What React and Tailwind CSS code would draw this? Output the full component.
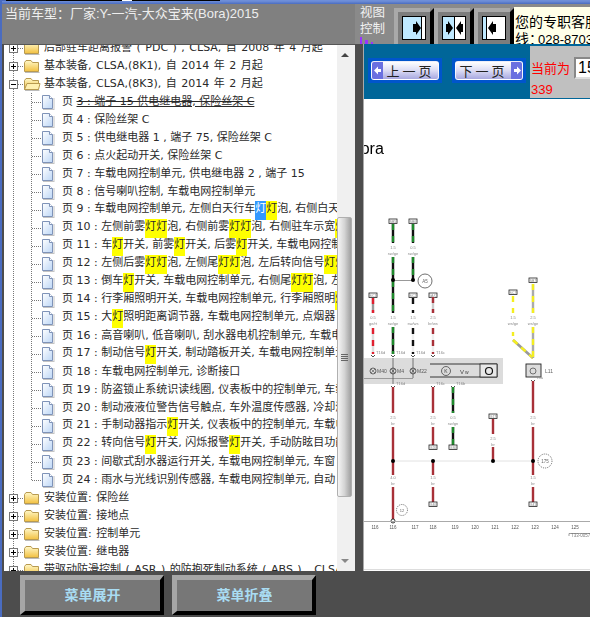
import React from 'react';

const treeFont = { fontFamily: '"DejaVu Sans", "Noto Sans CJK SC", sans-serif' };

const pages = [
  '页 4 : 保险丝架 C',
  '页 5 : 供电继电器 1 , 端子 75, 保险丝架 C',
  '页 6 : 点火起动开关, 保险丝架 C',
  '页 7 : 车载电网控制单元, 供电继电器 2 , 端子 15',
  '页 8 : 信号喇叭控制, 车载电网控制单元',
  '页 9 : 车载电网控制单元, 左侧白天行车灯灯泡, 右侧白天行车灯灯泡',
  '页 10 : 左侧前雾灯灯泡, 右侧前雾灯灯泡, 右侧驻车示宽灯灯泡',
  '页 11 : 车灯开关, 前雾灯开关, 后雾灯开关, 车载电网控制单元',
  '页 12 : 左侧后雾灯灯泡, 左侧尾灯灯泡, 左后转向信号灯灯泡',
  '页 13 : 倒车灯开关, 车载电网控制单元, 右侧尾灯灯泡, 左侧尾灯灯泡',
  '页 14 : 行李厢照明开关, 车载电网控制单元, 行李厢照明灯',
  '页 15 : 大灯照明距离调节器, 车载电网控制单元, 点烟器',
  '页 16 : 高音喇叭, 低音喇叭, 刮水器电机控制单元, 车载电网控制单元',
  '页 17 : 制动信号灯开关, 制动踏板开关, 车载电网控制单元',
  '页 18 : 车载电网控制单元, 诊断接口',
  '页 19 : 防盗锁止系统识读线圈, 仪表板中的控制单元, 车载电网',
  '页 20 : 制动液液位警告信号触点, 车外温度传感器, 冷却液',
  '页 21 : 手制动器指示灯开关, 仪表板中的控制单元, 车载电网',
  '页 22 : 转向信号灯开关, 闪烁报警灯开关, 手动防眩目功能',
  '页 23 : 间歇式刮水器运行开关, 车载电网控制单元, 车窗',
  '页 24 : 雨水与光线识别传感器, 车载电网控制单元, 自动',
];

// 灯 is the search hit, page 9's first one is the active match
const Marked = ({ text }) => {
  let seen = 0;
  return text.split('').map((ch, i) => {
    if (ch !== '灯') return ch;
    seen += 1;
    const active = text.startsWith('页 9 ') && seen === 1;
    return (
      <span key={i} className={active ? 'inline-block h-[19px] bg-[#3399ff] text-white' : 'inline-block h-[19px] bg-[#ffff00]'}>
        灯
      </span>
    );
  });
};

const FolderRow = ({ text, open }) => (
  <div className="flex h-[18px] items-center">
    <svg width="40" height="18" className="shrink-0">
      <defs>
        <linearGradient id="fold" x1="0" y1="0" x2="0" y2="1">
          <stop offset="0" stopColor="#fff8c8" />
          <stop offset="1" stopColor="#f2c040" />
        </linearGradient>
      </defs>
      <line x1="9.5" y1="0" x2="9.5" y2="18" stroke="#777" strokeDasharray="1 1" />
      <line x1="14" y1="9.5" x2="20" y2="9.5" stroke="#777" strokeDasharray="1 1" />
      <rect x="5.5" y="5.5" width="8" height="8" fill="#fff" stroke="#777" />
      <line x1="7" y1="9.5" x2="12" y2="9.5" stroke="#000" />
      {!open && <line x1="9.5" y1="7" x2="9.5" y2="12" stroke="#000" />}
      <path d="M20.5 5.5 L22 3.5 H27 L28.5 5.5 H34.5 V14.5 H20.5 Z" fill="url(#fold)" stroke="#b89a50" />
      {open && <path d="M20.5 14.5 L23 8.5 H36 L34.5 14.5 Z" fill="#fff0b0" stroke="#b89a50" />}
      <line x1="21" y1="15.5" x2="35.5" y2="15.5" stroke="#bbb" />
    </svg>
    <span className="whitespace-nowrap [word-spacing:1px]">{text}</span>
  </div>
);

const PageRow = ({ children, last }) => (
  <div className="flex h-[18px] items-center">
    <svg width="58" height="18" className="shrink-0">
      <defs>
        <linearGradient id="doc" x1="0" y1="0" x2="1" y2="1">
          <stop offset="0" stopColor="#ffffff" />
          <stop offset="1" stopColor="#bcd6f6" />
        </linearGradient>
      </defs>
      <line x1="9.5" y1="0" x2="9.5" y2="18" stroke="#777" strokeDasharray="1 1" />
      <line x1="27.5" y1="0" x2="27.5" y2={last ? 9 : 18} stroke="#777" strokeDasharray="1 1" />
      <line x1="28" y1="9.5" x2="38" y2="9.5" stroke="#777" strokeDasharray="1 1" />
      <path d="M38.5 2.5 H45.5 L48.5 5.5 V15.5 H38.5 Z" fill="url(#doc)" stroke="#7f93b8" />
      <path d="M45.5 2.5 V5.5 H48.5" fill="#fff" stroke="#7f93b8" />
      <line x1="50" y1="5" x2="50" y2="17" stroke="#c4c4c4" />
      <line x1="39" y1="16.5" x2="50" y2="16.5" stroke="#c4c4c4" />
    </svg>
    <span className="whitespace-nowrap">{children}</span>
  </div>
);

const ViewButton = ({ children }) => (
  <div className="flex h-[36px] w-[40px] shrink-0 self-end">
    <div className="w-[36px] bg-[#a9a9a9] pl-[4px] pt-[4px]">
      <div className="h-[32px] bg-[#7d7d7d] pl-[4px] pt-[4px]">
        <svg width="24" height="24" className="block">
          {children}
        </svg>
      </div>
    </div>
    <div className="w-[4px] bg-black [clip-path:polygon(0_4px,100%_0,100%_100%,0_100%)]" />
  </div>
);

const PagerButton = ({ label, dir }) => (
  <div className="flex h-[25px] w-[74px] shrink-0 items-stretch border-[3px] border-[#0055cc] bg-[#0055cc]">
    <div className={`flex flex-1 items-stretch overflow-hidden rounded-[3px] border border-white/80 bg-gradient-to-b from-[#ffffff] via-[#dcdcf4] to-[#a8a8e0] ${dir === 'next' ? 'flex-row-reverse' : ''}`}>
      <div className="flex w-[11px] items-center justify-center bg-[#6a70e0] text-[9px] leading-none text-white">
        <svg width="8" height="9">
          {dir === 'next' ? <path d="M1 3 H4 V0.5 L8 4.5 L4 8.5 V6 H1 Z" fill="#fff" /> : <path d="M7 3 H4 V0.5 L0 4.5 L4 8.5 V6 H7 Z" fill="#fff" />}
        </svg>
      </div>
      <span className="flex-1 text-center text-[13px] leading-[19px] tracking-[3px] text-[#222]">{label}</span>
    </div>
  </div>
);

const BevelButton = ({ label }) => (
  <div className="flex h-[40px] w-[144px] items-center justify-center border-t-[5px] border-r-[4px] border-b-[4px] border-l-[5px] border-t-[#a6a6a6] border-r-black border-b-black border-l-[#a6a6a6] bg-[#777777] text-[14px] font-bold text-[#a9dcf2]">
    {label}
  </div>
);

const Wire = ({ x, y1, y2, a, b, dash = 6 }) => (
  <g strokeWidth="2.4">
    <line x1={x} y1={y1} x2={x} y2={y2} stroke={a} />
    {b && <line x1={x} y1={y1} x2={x} y2={y2} stroke={b} strokeDasharray={`${dash} ${dash}`} />}
  </g>
);

const Tag = ({ x, y, w = 8, t }) => (
  <g>
    <rect x={x - w / 2} y={y} width={w} height="4.5" fill="#fff" stroke="#222" strokeWidth="0.8" />
    <text x={x} y={y + 3.8} fontSize="3.5" textAnchor="middle" fill="#888">{t}</text>
  </g>
);

const Note = ({ x, y, a, b }) => (
  <g fontSize="4" textAnchor="middle" fill="#888">
    <text x={x} y={y}>{a}</text>
    <text x={x} y={y + 6}>{b}</text>
  </g>
);

const Node = ({ x, y }) => <circle cx={x} cy={y} r="2" fill="#000" />;

const Pin = ({ x, y, a }) => (
  <g>
    <path d={`M${x - 2} ${y - 2} L${x} ${y} L${x + 2} ${y - 2}`} fill="none" stroke="#222" strokeWidth="0.8" />
    <text x={x + 3} y={y - 3} fontSize="4" fill="#888">{a}</text>
  </g>
);

const Diagram = () => (
  <svg width="226" height="471" className="block blur-[0.4px]" style={{ fontFamily: '"Liberation Sans", sans-serif' }}>
    <g transform="translate(-364 -99)">
      <text x="350" y="154" fontSize="16" fill="#000">Bora</text>

      <Tag x={393} y={219} t="SB5" />
      <Tag x={413} y={219} t="SB6" />
      <Wire x={393} y1={224} y2={243} a="#111" b="#1f8a2c" />
      <Wire x={413} y1={224} y2={243} a="#111" b="#1f8a2c" />
      <Note x={393} y={249} a="1.5" b="sw/ge" />
      <Note x={413} y={249} a="0.5" b="sw/ge" />
      <Wire x={393} y1={257} y2={313} a="#111" b="#1f8a2c" />
      <Wire x={413} y1={257} y2={280} a="#111" b="#1f8a2c" />
      <line x1="393" y1="280.5" x2="413" y2="280.5" stroke="#999" />
      <Node x={393} y={280} />
      <Node x={413} y={280} />
      <circle cx="425" cy="281" r="7" fill="#fff" stroke="#333" strokeWidth="0.7" />
      <text x="425" y="283" fontSize="4.5" textAnchor="middle" fill="#666">A5</text>

      <Tag x={373} y={293} t="SC1" />
      <Tag x={413} y={293} t="SC2" />
      <Tag x={433} y={293} t="5A/C" />
      <Wire x={373} y1={298} y2={313} a="#999" b="#e02030" />
      <Wire x={413} y1={298} y2={313} a="#fff" b="#111" />
      <Wire x={433} y1={297} y2={313} a="#ccc" b="#a83038" />
      <Note x={373} y={319} a="0.5" b="ge/rt" />
      <Note x={393} y={319} a="1.5" b="sw/ge" />
      <Note x={413} y={319} a="1.5" b="sw/ws" />
      <Note x={433} y={319} a="2.5" b="br/ws" />
      <Wire x={373} y1={328} y2={354} a="#ddd" b="#e02030" />
      <Wire x={393} y1={327} y2={354} a="#111" b="#1f8a2c" />
      <Wire x={413} y1={328} y2={354} a="#eee" b="#111" />
      <Wire x={433} y1={328} y2={354} a="#eee" b="#a83038" />
      <Pin x={373} y={357} a="T16d" />
      <Pin x={393} y={357} a="T16d" />
      <Pin x={413} y={357} a="T16d" />
      <Pin x={433} y={357} a="T16c" />

      <Tag x={533} y={278} t="SB7" />
      <Tag x={513} y={290} t="SC7" />
      <Wire x={533} y1={284} y2={313} a="#aaa" b="#f4ee20" />
      <Wire x={513} y1={296} y2={313} a="#fff" b="#f4ee20" />
      <Note x={513} y={319} a="1.5" b="ws/ge" />
      <Note x={533} y={319} a="2.5" b="ws/ge" />
      <Wire x={513} y1={332} y2={340} a="#fff" b="#f4ee20" dash={4} />
      <path d="M513 340 L533 358" stroke="#999" strokeWidth="2.6" fill="none" />
      <path d="M513 340 L533 358" stroke="#f4ee20" strokeWidth="2.4" strokeDasharray="6 5" fill="none" />
      <Wire x={533} y1={327} y2={358} a="#aaa" b="#f4ee20" />

      <rect x="364" y="358" width="139" height="26" fill="#dcdcdc" />
      <line x1="364" y1="378.5" x2="413" y2="378.5" stroke="#999" />
      <line x1="393" y1="358" x2="393" y2="384" stroke="#555" strokeWidth="0.8" />
      <line x1="413" y1="358" x2="413" y2="378" stroke="#555" strokeWidth="0.8" />
      {[[373, 'M40'], [393, 'M4'], [413, 'M22']].map(([x, t]) => (
        <g key={x}>
          <circle cx={x} cy="371" r="3" fill="none" stroke="#333" strokeWidth="0.7" />
          <path d={`M${x - 2} ${369} L${x + 2} ${373} M${x + 2} ${369} L${x - 2} ${373}`} stroke="#333" strokeWidth="0.5" />
          <text x={x + 4} y="373" fontSize="5" fill="#555">{t}</text>
        </g>
      ))}
      <path d="M430 364 H497 V377 H430" fill="none" stroke="#222" strokeWidth="0.9" />
      <circle cx="446" cy="371" r="4.5" fill="none" stroke="#333" strokeWidth="0.7" />
      <text x="446" y="373" fontSize="5" textAnchor="middle" fill="#444">K</text>
      <text x="460" y="374" fontSize="6" fill="#444">V</text>
      <text x="465" y="374" fontSize="5" fill="#444">w</text>
      <rect x="480" y="364" width="17" height="13" fill="#e8e8e8" stroke="#222" strokeWidth="0.8" />
      <circle cx="489" cy="371" r="3.5" fill="none" stroke="#111" strokeWidth="1.2" />

      <rect x="526" y="364" width="15" height="13" fill="#dcdcdc" stroke="#222" strokeWidth="0.9" />
      <circle cx="533" cy="371" r="3" fill="none" stroke="#444" strokeWidth="0.7" />
      <text x="545" y="373" fontSize="5" fill="#666">L11</text>

      <Pin x={393} y={388} a="T16d" />
      <Pin x={433} y={388} a="T16c" />
      <Pin x={453} y={388} a="T16b" />
      <Pin x={533} y={382} a="T3a" />
      <Wire x={393} y1={387} y2={413} a="#a83038" />
      <Wire x={433} y1={387} y2={413} a="#a83038" />
      <Wire x={453} y1={387} y2={413} a="#111" b="#1f8a2c" />
      <Wire x={533} y1={381} y2={413} a="#a83038" />
      <Note x={393} y={419} a="2.5" b="br" />
      <Note x={433} y={419} a="2.5" b="br" />
      <Note x={453} y={419} a="0.5" b="sw/gn" />
      <Note x={533} y={419} a="2.5" b="br" />
      <Wire x={393} y1={427} y2={475} a="#a83038" />
      <Wire x={433} y1={427} y2={445} a="#a83038" />
      <Wire x={453} y1={427} y2={445} a="#111" b="#1f8a2c" />
      <Wire x={533} y1={427} y2={475} a="#a83038" />
      <Tag x={433} y={445} t="G20" />
      <Tag x={453} y={445} t="G30" />

      <Tag x={493} y={414} t="G17" />
      <Wire x={493} y1={419} y2={434} a="#a83038" />
      <Note x={493} y={440} a="2.5" b="br" />
      <Wire x={493} y1={447} y2={461} a="#a83038" />

      <line x1="393" y1="461" x2="533" y2="461" stroke="#e2e2e2" />
      <Wire x={433} y1={461} y2={475} a="#a83038" />
      <Node x={393} y={461} />
      <Node x={433} y={461} />
      <Node x={493} y={461} />
      <Node x={533} y={461} />
      <circle cx="545" cy="461" r="7" fill="#fff" stroke="#333" strokeWidth="0.7" strokeDasharray="1 1" />
      <text x="545" y="463" fontSize="4.5" textAnchor="middle" fill="#666">175</text>

      <Note x={393} y={479} a="4.0" b="br" />
      <Note x={433} y={479} a="1.5" b="br" />
      <Note x={533} y={479} a="1.5" b="br" />
      <Wire x={393} y1={487} y2={519} a="#a83038" />
      <Wire x={433} y1={487} y2={502} a="#a83038" />
      <Wire x={533} y1={487} y2={502} a="#a83038" />
      <Tag x={433} y={502} t="G40" />
      <Tag x={533} y={502} t="G41" />
      <circle cx="402" cy="510" r="5.5" fill="#fff" stroke="#333" strokeWidth="0.7" strokeDasharray="1 1" />
      <text x="402" y="512" fontSize="4" textAnchor="middle" fill="#666">12</text>
      <circle cx="393" cy="521" r="2" fill="#fff" stroke="#000" strokeWidth="0.8" />

      <line x1="364" y1="521.5" x2="590" y2="521.5" stroke="#aaa" />
      {[[375, 116], [393, 116], [415, 117], [433, 118], [455, 119], [475, 120], [495, 121], [515, 122], [535, 123], [555, 124], [575, 125]].map(([x, t]) => (
        <text key={x} x={x} y="529" fontSize="4.5" textAnchor="middle" fill="#555">{t}</text>
      ))}
      <path d="M569 536 V533.5 H590" fill="none" stroke="#777" strokeWidth="0.7" />
      <text x="571" y="537" fontSize="4.5" fill="#777">T33-0057</text>
      <line x1="364" y1="569.5" x2="590" y2="569.5" stroke="#ddd" />
    </g>
  </svg>
);

export default function App() {
  return (
    <div
      className="relative flex h-[617px] w-[590px] overflow-hidden bg-[#4d4d4d]"
      style={{ fontFamily: '"Liberation Sans", "Noto Sans CJK SC", sans-serif' }}
    >
      <div className="w-[2px] shrink-0 bg-[#4a6cc0]" />
      <div className="flex w-[588px] flex-col">
        {/* window chrome */}
        <div className="flex h-[1px] shrink-0">
          <div className="w-[4px] bg-[#4a6cc0]" />
          <div className="w-[116px] bg-black" />
          <div className="w-[10px] bg-white" />
          <div className="w-[88px] bg-black" />
          <div className="flex-1 bg-[#6f8fd8]" />
        </div>
        <div className="h-[3px] shrink-0 bg-gradient-to-b from-[#6f8fd8] to-[#4a6cc0]" />

        {/* header */}
        <div className="flex h-[40px] shrink-0 overflow-hidden bg-[#808080]">
          <div className="w-[353px] shrink-0 pl-[3px] pt-[1px] text-[13px] leading-[18px] whitespace-nowrap text-[#eeeeee]">
            当前车型：厂家:Y-一汽-大众宝来(Bora)2015
          </div>
          <div className="flex w-[235px] bg-[#8a8a8a]">
            <div className="w-[39px] shrink-0 pl-[5px] pt-px">
              <div className="w-[26px] text-[12.5px] leading-[16px] text-[#f2f2f2]">视图控制</div>
              <div className="flex h-[7px] items-end gap-[3px]">
                <div className="h-[7px] w-[2px] bg-[#9933ff]" />
                <div className="h-[4px] w-[3px] bg-[#9933ff]" />
                <div className="h-[2px] w-[2px] bg-[#9933ff]" />
              </div>
            </div>
            <ViewButton>
              <rect x="0.5" y="0.5" width="23" height="23" fill="#bfe9ff" stroke="#000" />
              <rect x="20" y="1" width="3" height="22" fill="#fff" />
              <line x1="19.5" y1="1" x2="19.5" y2="23" stroke="#000" />
              <path d="M11 8 H14 V5 L19 12 L14 19 V16 H11 Z" fill="#000" />
            </ViewButton>
            <ViewButton>
              <rect x="0.5" y="0.5" width="23" height="23" fill="#fff" stroke="#000" />
              <rect x="1" y="1" width="11" height="22" fill="#bfe9ff" />
              <line x1="12.5" y1="1" x2="12.5" y2="23" stroke="#000" />
              <path d="M4 8 H6 V5 L11 12 L6 19 V16 H4 Z" fill="#000" />
              <path d="M21 8 H19 V5 L14 12 L19 19 V16 H21 Z" fill="#000" />
            </ViewButton>
            <ViewButton>
              <rect x="0.5" y="0.5" width="23" height="23" fill="#fff" stroke="#000" />
              <rect x="1" y="1" width="3" height="22" fill="#bfe9ff" />
              <line x1="4.5" y1="1" x2="4.5" y2="23" stroke="#000" />
              <path d="M14 8 H11 V5 L6 12 L11 19 V16 H14 Z" fill="#000" />
            </ViewButton>
            <div className="mt-[3px] flex-1 overflow-hidden bg-[#ffffe8] pl-px pt-[7px] text-[14px] leading-[17px] whitespace-nowrap text-black">
              <div>您的专职客服</div>
              <div>
                线：<span className="ml-[-5px] text-[13px]">028-8703</span>
              </div>
            </div>
          </div>
        </div>

        <div className="flex h-[527px] shrink-0">
          {/* page tree */}
          <div className="flex w-[353px] shrink-0 pl-[2px]">
            <div className="w-[333px] shrink-0 overflow-hidden border-t border-[#555] bg-white text-[11px] text-[#2a2a2a]" style={treeFont}>
              <div className="mt-[-6px]">
                <FolderRow text="后部驻车距离报警 ( PDC ) , CLSA, 自 2008 年 4 月起" />
                <FolderRow text="基本装备, CLSA,(8K1), 自 2014 年 2 月起" />
                <FolderRow text="基本装备, CLSA,(8K3), 自 2014 年 2 月起" open />
                <PageRow>
                  页 <span className="[text-decoration-line:underline_line-through]">3 : 端子 15 供电继电器, 保险丝架 C</span>
                </PageRow>
                {pages.map((p, i) => (
                  <PageRow key={p} last={i === pages.length - 1}>
                    <Marked text={p} />
                  </PageRow>
                ))}
                <FolderRow text="安装位置: 保险丝" />
                <FolderRow text="安装位置: 接地点" />
                <FolderRow text="安装位置: 控制单元" />
                <FolderRow text="安装位置: 继电器" />
                <FolderRow text="带驱动防滑控制 ( ASR ) 的防抱死制动系统 ( ABS ) , CLSA" />
              </div>
            </div>
            <div className="flex w-[18px] shrink-0 flex-col border-t border-[#555] bg-[#f0f0f0]">
              <div className="flex h-[20px] shrink-0 items-center justify-center pr-[3px]">
                <div className="h-0 w-0 border-x-[4px] border-b-[4px] border-x-transparent border-b-[#444]" />
              </div>
              <div className="h-[152px] shrink-0" />
              <div className="flex h-[280px] w-[15px] shrink-0 flex-col items-center justify-center gap-[1px] rounded-[2px] border border-[#b0b0b0] bg-gradient-to-r from-[#f6f6f6] via-[#d4d4d4] to-[#a0a0a0]">
                <div className="h-px w-[7px] bg-[#666]" />
                <div className="h-px w-[7px] bg-[#666]" />
                <div className="h-px w-[7px] bg-[#666]" />
                <div className="h-px w-[7px] bg-[#666]" />
              </div>
              <div className="flex-1" />
              <div className="flex h-[20px] shrink-0 items-center justify-center pr-[3px]">
                <div className="h-0 w-0 border-x-[4px] border-t-[4px] border-x-transparent border-t-[#888]" />
              </div>
            </div>
          </div>

          <div className="w-[9px] shrink-0 border-r border-[#aaaaaa] bg-[#4d4d4d]" />

          {/* drawing pane */}
          <div className="flex w-[226px] shrink-0 flex-col overflow-hidden">
            <div className="flex h-[55px] shrink-0 items-center bg-[#006699]">
              <div className="mb-[3px] flex w-[166px] shrink-0 gap-[10px] pl-[4px]">
                <PagerButton label="上一页" dir="prev" />
                <PagerButton label="下一页" dir="next" />
              </div>
              <div className="h-[52px] w-[60px] shrink-0 overflow-hidden bg-[#c0c0c0] pt-[11px] text-[13px] leading-[18px] text-[#ff0000]">
                <div className="flex h-[22px] items-center">
                  <span className="shrink-0 whitespace-nowrap pl-px pt-[3px]">当前为</span>
                  <div className="ml-[4px] h-[22px] w-[40px] shrink-0 border-2 border-t-[#888] border-r-[#ddd] border-b-[#ddd] border-l-[#888] bg-white pl-[2px] text-[16px] leading-[18px] text-black">15</div>
                </div>
                <div className="mt-[2px] pl-px">339</div>
              </div>
            </div>
            <div className="flex-1 bg-white">
              <Diagram />
            </div>
          </div>
        </div>

        {/* menu buttons */}
        <div className="flex flex-1 gap-[8px] pl-[18px] pt-[4px]">
          <BevelButton label="菜单展开" />
          <BevelButton label="菜单折叠" />
        </div>
      </div>
    </div>
  );
}
